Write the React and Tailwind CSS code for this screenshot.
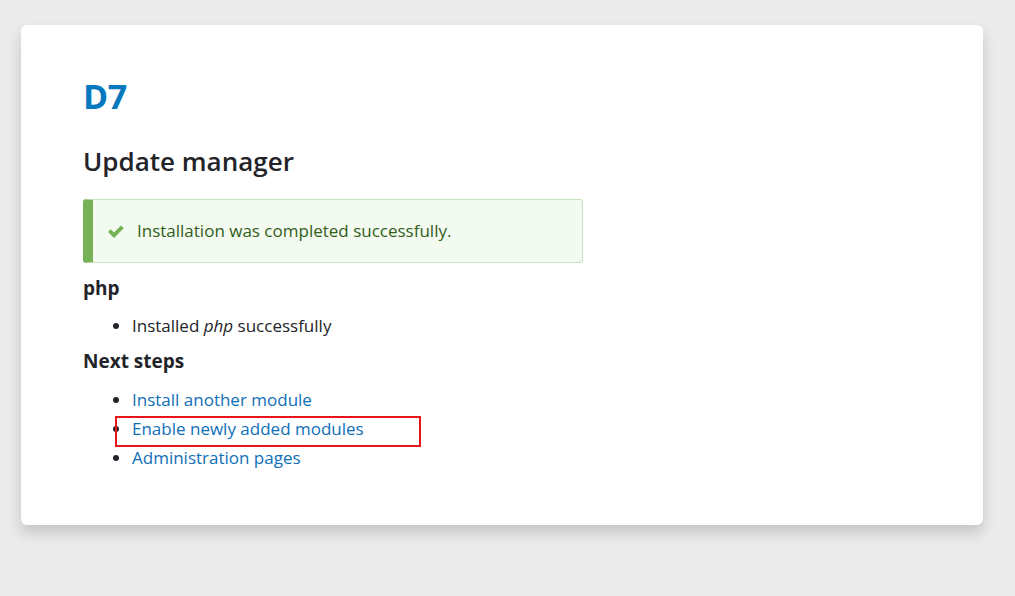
import React from 'react';

function CheckIcon() {
  return (
    <svg viewBox="0 0 16 16" className="h-[20px] w-[20px]" aria-hidden="true">
      <path d="M1.6 8.7l2.2-2.2 2.6 2.6 5.6-5.6L14.2 5.7 6.4 13.5z" fill="#73b355" />
    </svg>
  );
}

export default function App() {
  const font = { fontFamily: '"Open Sans", "Noto Sans", sans-serif' };

  return (
    <div className="min-h-[596px] bg-[#ebebeb] pt-[25px] px-[21px] pb-[72px] text-[#232429]" style={font}>
      <div className="w-[962px] h-[500px] bg-white rounded-[6px] shadow-[0_8px_14px_rgba(0,0,0,0.16)] pl-[62px] pt-[47px]">
        <h1 className="text-[34px] leading-[48px] font-bold text-[#0678be] tracking-[-0.5px]">D7</h1>

        <h2 className="mt-[23px] text-[26px] leading-[36px] font-semibold text-[#232429]">Update manager</h2>

        <div className="mt-[20px] w-[500px] h-[64px] flex items-center rounded-[3px] border border-[#c9e1bd] bg-[#f3faef] border-l-[10px] border-l-[#77b259] pl-[13px]">
          <CheckIcon />
          <span className="ml-[11px] text-[17px] text-[#325e1c]">Installation was completed successfully.</span>
        </div>

        <h3 className="mt-[12px] text-[19px] leading-[26px] font-bold">php</h3>
        <ul className="mt-[10px] ml-[49px] list-disc text-[17px] leading-[29px]">
          <li>Installed <em>php</em> successfully</li>
        </ul>

        <h3 className="mt-[8px] text-[19px] leading-[26px] font-bold">Next steps</h3>
        <ul className="mt-[11px] ml-[49px] list-disc text-[17px] leading-[29px] text-[#232429]">
          <li><a href="#" className="text-[#0f6fb8]">Install another module</a></li>
          <li className="relative">
            <a href="#" className="text-[#0f6fb8]">Enable newly added modules</a>
            <span className="absolute left-[-17px] top-[2px] w-[306px] h-[31px] border-2 border-[#e8141b] pointer-events-none" />
          </li>
          <li><a href="#" className="text-[#0f6fb8]">Administration pages</a></li>
        </ul>
      </div>
    </div>
  );
}
